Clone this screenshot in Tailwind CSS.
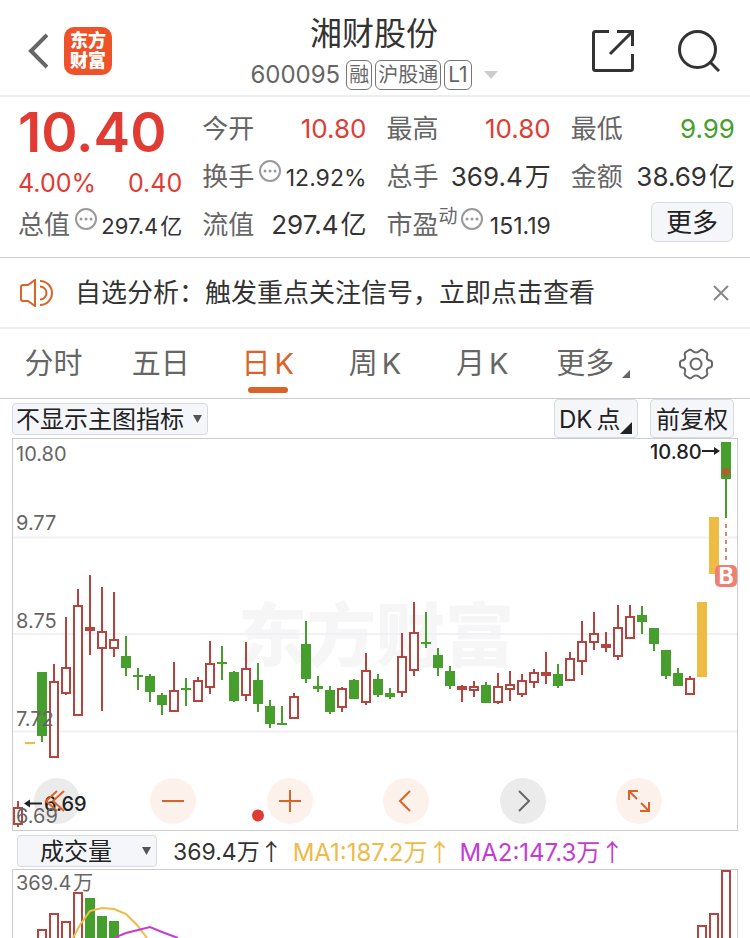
<!DOCTYPE html>
<html lang="zh-CN">
<head>
    <meta charset="UTF-8">
    <meta name="viewport" content="width=device-width, initial-scale=1.0">
    <title>湘财股份 600095</title>
    <script src="https://cdn.jsdelivr.net/npm/@tailwindcss/browser@4"></script>
    <style>
        body {
            font-family: 'Inter', 'Noto Sans CJK SC', sans-serif;
        }
    </style>
</head>
<body class="bg-white text-[#333] overflow-x-hidden">
    <!-- Header -->
    <header class="grid grid-cols-[1fr_auto_1fr] items-center h-[97px] border-b-2 border-[#eee] pl-7 pr-[30px]">
        <div class="flex items-center gap-4 pt-1.5">
            <button aria-label="返回" class="w-5 h-9">
                <svg class="w-5 h-9" viewBox="0 0 20 36" fill="none" stroke="#666" stroke-width="4">
                    <path d="M19 2L3 18L19 34" />
                </svg>
            </button>
            <a href="#" class="flex flex-col items-center justify-center w-12 h-12 rounded-[10px] bg-[#ee5228] text-white text-[18px] leading-5 font-black">
                <span>东方</span>
                <span>财富</span>
            </a>
        </div>
        <div class="flex flex-col items-center self-start pt-3.5">
            <h1 class="text-[32px] leading-10">湘财股份</h1>
            <div class="flex items-center h-[42px] text-[#666]">
                <span class="text-[24px] mr-1.5">600095</span>
                <span class="h-[30px] leading-7 px-0.5 mr-[3px] text-[20px] border border-[#777] rounded-md">融</span>
                <span class="h-[30px] leading-7 px-0.5 mr-[3px] text-[20px] border border-[#777] rounded-md">沪股通</span>
                <span class="h-[30px] leading-7 px-[3px] text-[21px] border border-[#777] rounded-md">L1</span>
                <svg class="w-[14px] h-2 ml-3" viewBox="0 0 14 8"><path d="M0 0H14L7 8Z" fill="#ccc" /></svg>
            </div>
        </div>
        <div class="flex items-center justify-end gap-11 pt-1.5">
            <button aria-label="分享">
                <svg class="w-[42px] h-[42px]" viewBox="0 0 42 42" fill="none" stroke="#333" stroke-width="3">
                    <path d="M17 1.500H3.500Q1.500 1.500 1.500 3.500V38.500Q1.500 40.500 3.500 40.500H38.500Q40.500 40.500 40.500 38.500V24M25 1.500H40.500V16M40 2L18 24" />
                </svg>
            </button>
            <button aria-label="搜索">
                <svg class="w-[42px] h-[42px]" viewBox="0 0 42 42" fill="none" stroke="#333" stroke-width="3">
                    <circle cx="19.500" cy="19.500" r="18" />
                    <path d="M32 32L41 41" />
                </svg>
            </button>
        </div>
    </header>

    <!-- Quote -->
    <section class="grid grid-cols-4 gap-5 pl-[18px] pr-[15px] pt-[7px] pb-[9px] border-b border-[#ccc] text-[26px] text-[#666] whitespace-nowrap">
        <div>
            <div class="h-14 leading-14 text-[55px] font-semibold text-[#e03c34]">10.40</div>
            <div class="h-10 leading-[46px] flex justify-between text-[25px] text-[#e03c34]"><span>4.00%</span><span>0.40</span></div>
            <div class="h-12 flex items-center justify-between">
                <span class="flex items-start gap-[5px]">总值
                    <svg class="w-[22px] h-[22px] mt-[3px]" viewBox="0 0 22 22" fill="#999"><circle cx="11" cy="11" r="10" fill="none" stroke="#999" stroke-width="2" /><circle cx="6" cy="11" r="1.500" /><circle cx="11" cy="11" r="1.500" /><circle cx="16" cy="11" r="1.500" /></svg>
                </span>
                <span class="text-[22px] text-[#333] pt-1">297.4<span class="pl-0.5">亿</span></span>
            </div>
        </div>
        <div>
            <div class="h-12 flex items-center justify-between"><span>今开</span><span class="text-[#e03c34]">10.80</span></div>
            <div class="h-12 flex items-center justify-between">
                <span class="flex items-start gap-[5px]">换手
                    <svg class="w-[22px] h-[22px] mt-[3px]" viewBox="0 0 22 22" fill="#999"><circle cx="11" cy="11" r="10" fill="none" stroke="#999" stroke-width="2" /><circle cx="6" cy="11" r="1.500" /><circle cx="11" cy="11" r="1.500" /><circle cx="16" cy="11" r="1.500" /></svg>
                </span>
                <span class="text-[23px] text-[#333] pt-1">12.92%</span>
            </div>
            <div class="h-12 flex items-center justify-between"><span>流值</span><span class="text-[#333]">297.4<span class="pl-0.5">亿</span></span></div>
        </div>
        <div>
            <div class="h-12 flex items-center justify-between"><span>最高</span><span class="text-[#e03c34]">10.80</span></div>
            <div class="h-12 flex items-center justify-between"><span>总手</span><span class="text-[#333]">369.4<span class="pl-0.5">万</span></span></div>
            <div class="h-12 flex items-center justify-between">
                <span class="flex items-start">市盈<span class="text-[19px] leading-6 mr-[3px]">动</span>
                    <svg class="w-[22px] h-[22px] mt-[3px]" viewBox="0 0 22 22" fill="#999"><circle cx="11" cy="11" r="10" fill="none" stroke="#999" stroke-width="2" /><circle cx="6" cy="11" r="1.500" /><circle cx="11" cy="11" r="1.500" /><circle cx="16" cy="11" r="1.500" /></svg>
                </span>
                <span class="text-[23px] text-[#333] pt-1">151.19</span>
            </div>
        </div>
        <div>
            <div class="h-12 flex items-center justify-between"><span>最低</span><span class="text-[#46a02c]">9.99</span></div>
            <div class="h-12 flex items-center justify-between"><span>金额</span><span class="text-[#333]">38.69<span class="pl-0.5">亿</span></span></div>
            <div class="flex justify-end pt-0.5 pr-0.5">
                <button class="w-[82px] h-10 pt-0.5 leading-9 border border-[#d8dae2] rounded-md bg-[#f5f6fa] text-[#222]">更多</button>
            </div>
        </div>
    </section>

    <!-- Notice -->
    <section class="flex items-center h-[71px] border-b-2 border-[#eee] pl-[19px] pr-[21px]">
        <svg class="w-[34px] h-7" viewBox="0 0 34 28" fill="none" stroke="#dc6328" stroke-width="2">
            <path d="M16 1V27L9 22H4Q2 22 2 20V8Q2 6 4 6H9Z" />
            <path d="M21 7.500A6.500 6.500 0 0 1 21 20.500M21 2A12 12 0 0 1 21 26" />
        </svg>
        <a href="#" class="flex-1 pl-[22px] text-[26px]">自选分析：触发重点关注信号，立即点击查看</a>
        <button aria-label="关闭">
            <svg class="w-4 h-4" viewBox="0 0 16 16" fill="none" stroke="#888" stroke-width="2"><path d="M1 1L15 15M15 1L1 15" /></svg>
        </button>
    </section>

    <!-- Period tabs -->
    <nav class="grid grid-cols-7 h-[70px] border-b border-[#ccc] text-[29px] text-[#666]">
        <button>分时</button>
        <button>五日</button>
        <button class="relative flex items-center justify-center gap-1 text-[#dc6328]"><span>日</span><span>K</span>
            <span class="absolute bottom-[5px] left-1/2 -translate-x-1/2 w-10 h-1.5 rounded-full bg-[#dc6328]"></span>
        </button>
        <button class="flex items-center justify-center gap-1"><span>周</span><span>K</span></button>
        <button class="flex items-center justify-center gap-1"><span>月</span><span>K</span></button>
        <button class="flex items-center justify-center gap-2 pl-2">更多
            <svg class="w-2 h-2 mt-5" viewBox="0 0 8 8"><path d="M8 0V8H0Z" fill="#666" /></svg>
        </button>
        <button aria-label="设置" class="flex items-center justify-center">
            <svg class="w-[34px] h-8" viewBox="0 0 34 32" fill="none" stroke="#666" stroke-width="2">
                <path d="M10 2Q12 1 13.500 3Q17 6 20.500 3Q22 1 24 2L27 4Q29 5 28 8Q27 12 31 12.500Q33 13 33 15V17Q33 19 31 19.500Q27 20 28 24Q29 27 27 28L24 30Q22 31 20.500 29Q17 26 13.500 29Q12 31 10 30L7 28Q5 27 6 24Q7 20 3 19.500Q1 19 1 17V15Q1 13 3 12.500Q7 12 6 8Q5 5 7 4Z" />
                <circle cx="17" cy="16" r="5.500" />
            </svg>
        </button>
    </nav>

    <!-- Chart toolbar -->
    <div class="flex items-center h-[39px] pl-3 pr-4 text-[24px] text-[#222]">
        <div class="relative">
            <select aria-label="主图指标" class="block appearance-none w-[196px] h-8 pl-[3px] pt-0.5 leading-7 border border-[#d8dae2] rounded bg-[#f5f6fa]">
                <option>不显示主图指标</option>
            </select>
            <svg class="absolute right-1.5 top-3 w-[9px] h-2 pointer-events-none" viewBox="0 0 9 8"><path d="M0 0H9L4.500 8Z" fill="#555" /></svg>
        </div>
        <button class="relative flex items-center gap-1 ml-auto w-[84px] h-[39px] pl-1 pt-0.5 border border-[#d8dae2] rounded bg-[#f5f6fa]"><span>DK</span><span>点</span>
            <svg class="absolute right-[5px] bottom-[3px] w-3 h-3" viewBox="0 0 12 12"><path d="M12 0V12H0Z" fill="#222" /></svg>
        </button>
        <button class="ml-3 w-[84px] h-[39px] pt-0.5 border border-[#d8dae2] rounded bg-[#f5f6fa]">前复权</button>
    </div>

    <!-- Candlestick chart -->
    <section class="relative mx-3 border border-[#ccc]">
        <svg id="kline" class="block w-full" viewBox="13 439 724 391">
            <text x="376" y="661" text-anchor="middle" font-size="69" class="font-black" fill="#f6f6f6">东方财富</text>
            <path d="M13 537.500H737M13 634H737M13 731.500H737" stroke="#f0f0f6" stroke-width="2" />
            <g id="candles"></g>
            <g font-size="20" fill="#666">
                <text x="16" y="461">10.80</text>
                <text x="16" y="530">9.77</text>
                <text x="16" y="628">8.75</text>
                <text x="16" y="726">7.72</text>
            </g>
            <!-- buy signal -->
            <circle cx="726" cy="472" r="4" fill="#a8622c" />
            <path d="M726 524V562" stroke="#e0847a" stroke-width="2" stroke-dasharray="4 4" />
            <rect x="715" y="565" width="22" height="22" rx="5" fill="#ee8072" />
            <text x="726" y="584" text-anchor="middle" font-size="23" class="font-bold" fill="#fff">B</text>
            <!-- period high -->
            <text x="650" y="459" font-size="20" class="font-medium" fill="#222">10.80</text>
            <path d="M702 451H716" stroke="#222" stroke-width="2" />
            <path d="M714 447L720 451L714 455Z" fill="#222" />
            <circle cx="258" cy="815.500" r="6" fill="#e03c34" />
        </svg>
        <div class="absolute left-[21px] right-[75px] bottom-1.5 flex justify-between">
            <button aria-label="最早" class="w-[46px] h-[46px] rounded-full bg-[#ebebeb]"></button>
            <button aria-label="缩小" class="flex items-center justify-center w-[46px] h-[46px] rounded-full bg-[#fdf1ec]">
                <svg class="w-6 h-6" viewBox="0 0 24 24" stroke="#dc6328" stroke-width="2"><path d="M1 12H23" /></svg>
            </button>
            <button aria-label="放大" class="flex items-center justify-center w-[46px] h-[46px] rounded-full bg-[#fdf1ec]">
                <svg class="w-6 h-6" viewBox="0 0 24 24" stroke="#dc6328" stroke-width="2"><path d="M1 12H23M12 1V23" /></svg>
            </button>
            <button aria-label="左移" class="flex items-center justify-center w-[46px] h-[46px] rounded-full bg-[#fdf1ec]">
                <svg class="w-6 h-6" viewBox="0 0 24 24" fill="none" stroke="#dc6328" stroke-width="2"><path d="M16 2L6 12L16 22" /></svg>
            </button>
            <button aria-label="右移" class="flex items-center justify-center w-[46px] h-[46px] rounded-full bg-[#ebebeb]">
                <svg class="w-6 h-6" viewBox="0 0 24 24" fill="none" stroke="#666" stroke-width="2"><path d="M8 2L18 12L8 22" /></svg>
            </button>
            <button aria-label="全屏" class="flex items-center justify-center w-[46px] h-[46px] rounded-full bg-[#fdf1ec]">
                <svg class="w-6 h-6" viewBox="0 0 24 24" fill="none" stroke="#dc6328" stroke-width="2"><path d="M11 2H2V11M2 2L10 10M13 22H22V13M22 22L14 14" /></svg>
            </button>
        </div>
        <!-- period low, drawn over the first button -->
        <svg class="absolute inset-0 w-full h-full pointer-events-none" viewBox="13 439 724 391">
            <text x="44" y="811" font-size="20" class="font-medium" fill="#222">6.69</text>
            <path d="M28 803.500H42" stroke="#222" stroke-width="2" />
            <path d="M30 799.500L24 803.500L30 807.500Z" fill="#222" />
            <path d="M57 791L46 801L57 811M64 791L53 801L64 811" fill="none" stroke="#dc6328" stroke-width="2" />
            <text x="16" y="823" font-size="20" fill="#666">6.69</text>
        </svg>
    </section>

    <!-- Volume toolbar -->
    <div class="flex items-center h-[38px] pt-px pl-[17px] text-[24px] whitespace-nowrap">
        <div class="relative">
            <select aria-label="副图指标" class="block appearance-none w-[140px] h-8 pl-[22px] pt-0.5 leading-7 text-[#222] border border-[#d8dae2] rounded bg-[#f5f6fa]">
                <option>成交量</option>
            </select>
            <svg class="absolute right-1.5 top-3 w-[9px] h-2 pointer-events-none" viewBox="0 0 9 8"><path d="M0 0H9L4.500 8Z" fill="#555" /></svg>
        </div>
        <span class="ml-4 pt-0.5 text-[23px]">369.4万<span class="font-['Noto_Sans_CJK_SC']">↑</span></span>
        <span class="ml-2.5 pt-0.5 text-[#f0ba48]">MA1:187.2万<span class="font-['Noto_Sans_CJK_SC']">↑</span></span>
        <span class="ml-2 pt-0.5 text-[#c43cd2]">MA2:147.3万<span class="font-['Noto_Sans_CJK_SC']">↑</span></span>
    </div>

    <!-- Volume chart -->
    <section class="mx-3 border border-b-0 border-[#ccc]">
        <svg class="block w-full" viewBox="13 870 724 68">
            <g id="volumes"></g>
            <path d="M73 938L80 925L90 911L102 908L114 909L126 914L137 925L147 938" fill="none" stroke="#f0ba48" stroke-width="2" />
            <path d="M114 938L126 933L138 930L150 927L162 932L178 938" fill="none" stroke="#c43cd2" stroke-width="2" />
            <text x="16" y="890" font-size="20" fill="#666">369.4<tspan dx="2">万</tspan></text>
        </svg>
    </section>

    <script>
        const SVG_NS = 'http://www.w3.org/2000/svg';
        const RED = '#b5443e';
        const GREEN = '#469e2c';
        const YELLOW = '#eebc42';
        const STEP = 12;
        const FIRST_X = 18;

        // [type, high, body top, body bottom, low], one per trading day
        // r = up (hollow), s = up (solid), g = down, y = limit up
        const candles = [
            ['r', 801, 807, 825, 827], ['y', 742, 742, 744, 744], ['g', 672, 672, 736, 742],
            ['r', 664, 681, 758, 758], ['r', 617, 667, 694, 695], ['r', 589, 605, 716, 716],
            ['s', 575, 627, 631, 655], ['r', 587, 631, 649, 711], ['r', 592, 639, 649, 657],
            ['g', 636, 656, 668, 676], ['g', 668, 675, 677, 690], ['g', 674, 676, 692, 702],
            ['g', 693, 695, 705, 715], ['r', 662, 690, 712, 712], ['g', 678, 688, 690, 706],
            ['r', 677, 680, 702, 702], ['r', 641, 663, 688, 694], ['g', 646, 662, 664, 680],
            ['g', 671, 672, 701, 702], ['r', 642, 668, 696, 701], ['g', 663, 680, 704, 712],
            ['g', 700, 706, 724, 728], ['g', 706, 723, 725, 725], ['r', 693, 696, 719, 719],
            ['g', 621, 644, 679, 683], ['g', 676, 686, 689, 692], ['g', 686, 690, 712, 714],
            ['r', 687, 688, 708, 712], ['g', 679, 680, 699, 699], ['r', 653, 670, 703, 705],
            ['g', 674, 679, 695, 697], ['g', 688, 693, 697, 699], ['r', 633, 656, 693, 697],
            ['r', 602, 632, 671, 676], ['g', 612, 642, 644, 648], ['g', 648, 655, 668, 676],
            ['g', 666, 671, 686, 689], ['s', 685, 686, 690, 702], ['r', 681, 686, 691, 697],
            ['g', 682, 685, 703, 703], ['r', 673, 686, 703, 704], ['r', 671, 684, 690, 701],
            ['r', 674, 680, 695, 697], ['r', 669, 672, 683, 688], ['s', 652, 672, 676, 684],
            ['g', 664, 674, 686, 688], ['r', 652, 658, 681, 681], ['r', 621, 641, 662, 675],
            ['r', 612, 633, 643, 650], ['s', 632, 644, 648, 652], ['r', 605, 627, 657, 660],
            ['r', 605, 616, 639, 639], ['g', 606, 615, 622, 634], ['g', 628, 628, 644, 651],
            ['g', 650, 650, 676, 679], ['g', 668, 673, 686, 686], ['r', 676, 678, 695, 695],
            ['y', 602, 602, 677, 677], ['y', 517, 517, 574, 574], ['g', 442, 442, 479, 518]
        ];

        // [type, slot, top]
        const volumes = [
            ['r', 2, 929], ['r', 3, 913], ['r', 4, 921], ['r', 5, 892],
            ['g', 6, 898], ['g', 7, 916], ['g', 8, 921],
            ['r', 57, 925], ['r', 58, 913], ['r', 59, 870]
        ];

        function addRect(parent, x, y, width, height, fill, stroke) {
            const rect = document.createElementNS(SVG_NS, 'rect');
            rect.setAttribute('x', x);
            rect.setAttribute('y', y);
            rect.setAttribute('width', width);
            rect.setAttribute('height', height);
            rect.setAttribute('fill', fill);
            if (stroke) {
                rect.setAttribute('stroke', stroke);
                rect.setAttribute('stroke-width', 2);
            }
            parent.appendChild(rect);
        }

        function addBody(parent, type, x, top, bottom) {
            if (type === 'r') {
                addRect(parent, x - 4, top + 1, 8, bottom - top - 2, '#fff', RED);
            } else {
                const color = type === 'g' ? GREEN : type === 'y' ? YELLOW : RED;
                addRect(parent, x - 5, top, 10, bottom - top, color);
            }
        }

        const candleGroup = document.getElementById('candles');
        candles.forEach(([type, high, top, bottom, low], i) => {
            const x = FIRST_X + i * STEP;
            const color = type === 'g' ? GREEN : type === 'y' ? YELLOW : RED;
            addRect(candleGroup, x - 1, high, 2, low - high, color);
            addBody(candleGroup, type, x, top, bottom);
        });

        // buy marker sits on the last candle
        const marker = document.querySelector('#kline circle');
        marker.parentNode.appendChild(marker);

        const volumeGroup = document.getElementById('volumes');
        volumes.forEach(([type, slot, top]) => {
            addBody(volumeGroup, type, FIRST_X + slot * STEP, top, 942);
        });
    </script>
</body>
</html>
